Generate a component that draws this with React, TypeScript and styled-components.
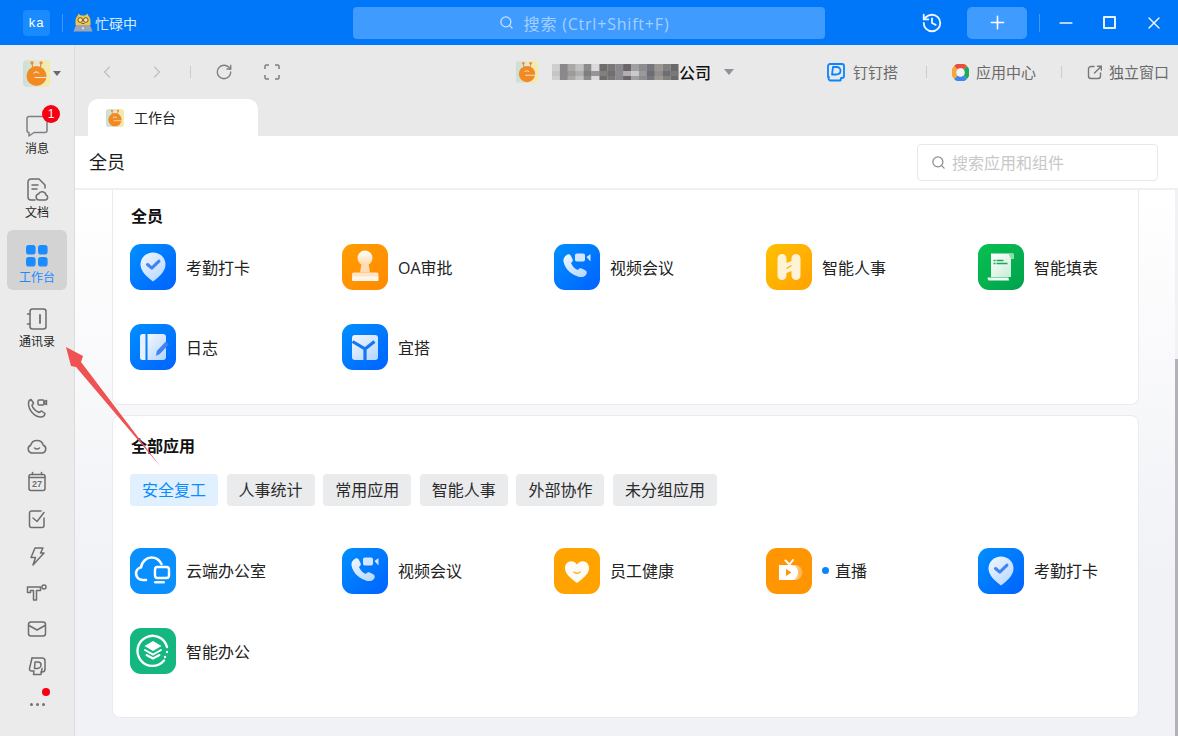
import React from "react";
import styled, { createGlobalStyle } from "styled-components";
import { ChevronLeft, ChevronRight, RotateCw, Search, Plus, Minus, X, History } from "lucide-react";

const Global = createGlobalStyle`
  html, body { margin: 0; padding: 0; width: 1178px; height: 736px; overflow: hidden; }
  body { font-family: "Open Sans", "Noto Sans CJK SC", sans-serif; color: #1f1f1f; }
  * { box-sizing: border-box; }
`;

const Shell = styled.div`
  position: relative;
  width: 1178px;
  height: 736px;
  display: flex;
  flex-direction: column;
  overflow: hidden;
`;

/* title bar */
const TitleBar = styled.header`
  height: 45px;
  flex: none;
  background: #0077f8;
  display: flex;
  align-items: center;
  color: #fff;
`;
const Logo = styled.div`
  width: 27px;
  height: 26px;
  margin-left: 23px;
  border-radius: 4px;
  background: #1a8bff;
  font: 13px "Liberation Sans", sans-serif;
  letter-spacing: 1px;
  display: flex;
  align-items: center;
  justify-content: center;
`;
const TitleDivider = styled.span<{ $left: number }>`
  width: 1px;
  height: 18px;
  margin-left: ${(p) => p.$left}px;
  background: #3f98fb;
`;
const Status = styled.div`
  width: 280px;
  margin-left: 10px;
  display: flex;
  align-items: center;
  gap: 2px;
  font-size: 14px;
  color: #d8e9ff;
`;
const GlobalSearch = styled.div`
  width: 472px;
  height: 32px;
  border-radius: 4px;
  background: #409bff;
  color: #a5cfff;
  font-size: 16px;
  letter-spacing: 0.8px;
  display: flex;
  align-items: center;
  justify-content: center;
  gap: 10px;
  padding-right: 10px;
`;
const WinBtn = styled.div<{ $left: number }>`
  margin-left: ${(p) => p.$left}px;
  display: flex;
  align-items: center;
  justify-content: center;
`;
const AddBtn = styled.div`
  width: 60px;
  height: 32px;
  margin-left: 24px;
  border-radius: 5px;
  background: #409bff;
  display: flex;
  align-items: center;
  justify-content: center;
`;
const MaxBox = styled.span`
  width: 13px;
  height: 13px;
  border: 2px solid #e6f1ff;
  border-radius: 1px;
  display: block;
`;

const Body = styled.div`
  flex: 1;
  min-height: 0;
  display: flex;
`;

/* side rail */
const Rail = styled.nav`
  width: 75px;
  flex: none;
  background: #ebebeb;
  border-right: 1px solid #dcdcdc;
  display: flex;
  flex-direction: column;
  align-items: center;
  padding-top: 15px;
`;
const RailAvatar = styled.div`
  height: 27px;
  width: 100%;
  padding-left: 23px;
  margin-bottom: 14px;
  display: flex;
  align-items: center;
  gap: 3px;
`;
const Caret = styled.i<{ $color: string; $w: number }>`
  display: block;
  width: 0;
  height: 0;
  border-left: ${(p) => p.$w}px solid transparent;
  border-right: ${(p) => p.$w}px solid transparent;
  border-top: ${(p) => p.$w + 1}px solid ${(p) => p.$color};
`;
const RailItem = styled.div<{ $active?: boolean }>`
  position: relative;
  width: 60px;
  height: 60px;
  margin-bottom: 4.6px;
  border-radius: 6px;
  background: ${(p) => (p.$active ? "#d3d3d3" : "transparent")};
  color: ${(p) => (p.$active ? "#1a8cff" : "#1f1f1f")};
  font-size: 12px;
  line-height: 16px;
  display: flex;
  flex-direction: column;
  align-items: center;
  justify-content: flex-end;
  padding-bottom: 4.5px;
  gap: 3px;
`;
const Badge = styled.span`
  position: absolute;
  left: 35px;
  top: 4px;
  width: 18px;
  height: 18px;
  border-radius: 50%;
  background: #f60012;
  color: #fff;
  font: 12px/18px "Liberation Sans", sans-serif;
  text-align: center;
`;
const RailSmall = styled.div`
  margin-top: 38px;
  display: flex;
  flex-direction: column;
  align-items: center;
  gap: 14.85px;
`;
const More = styled.div`
  position: relative;
  width: 20px;
  height: 20px;
  margin-top: 2px;
  display: flex;
  align-items: center;
  justify-content: center;
  gap: 3px;
`;
const MoreDot = styled.i`
  width: 3px;
  height: 3px;
  border-radius: 50%;
  background: #6f6f78;
`;
const RedDot = styled.i`
  position: absolute;
  right: -3px;
  top: -6px;
  width: 8px;
  height: 8px;
  border-radius: 50%;
  background: #f60012;
`;

/* main */
const Main = styled.main`
  flex: 1;
  min-width: 0;
  display: flex;
  flex-direction: column;
`;
const Toolbar = styled.div`
  height: 54px;
  flex: none;
  background: #e9e9e9;
  display: flex;
  align-items: center;
  padding-right: 9px;
`;
const NavGroup = styled.div`
  width: 441px;
  flex: none;
  padding-left: 22px;
  display: flex;
  align-items: center;
`;
const NavBtn = styled.div<{ $left: number }>`
  margin-left: ${(p) => p.$left}px;
  display: flex;
  align-items: center;
`;
const ToolDivider = styled.span<{ $left: number; $right: number }>`
  width: 1px;
  height: 12px;
  background: #cbcbcb;
  margin: 0 ${(p) => p.$right}px 0 ${(p) => p.$left}px;
`;
const Company = styled.div`
  display: flex;
  align-items: center;
  font-size: 16px;
  font-weight: 500;
  color: #111;
`;
const CompanyGap = styled.span`
  width: 12px;
`;
const CompanyName = styled.span`
  margin-right: 13px;
  width: 32px;
  white-space: nowrap;
`;
const ToolLinks = styled.div`
  margin-left: auto;
  display: flex;
  align-items: center;
  font-size: 15px;
  color: #6a6a6a;
`;
const ToolLink = styled.div<{ $gap: number }>`
  display: flex;
  align-items: center;
  gap: ${(p) => p.$gap}px;
  white-space: nowrap;
`;
const Raised = styled.span`
  padding-bottom: 2px;
`;
const TabRow = styled.div`
  height: 37px;
  flex: none;
  background: #e9e9e9;
  padding-left: 13px;
  display: flex;
  align-items: flex-end;
`;
const Tab = styled.div`
  width: 170px;
  height: 37px;
  border-radius: 10px 10px 0 0;
  background: #fff;
  padding-left: 18px;
  display: flex;
  align-items: center;
  gap: 10px;
  font-size: 14px;
  color: #222;
`;
const PageHead = styled.div`
  height: 54px;
  flex: none;
  background: #fff;
  border-bottom: 2px solid #f0f0f3;
  padding: 0 20px 0 14px;
  display: flex;
  align-items: center;
  justify-content: space-between;
  font-size: 18px;
  color: #1a1a1a;
`;
const SearchBox = styled.div`
  width: 241px;
  height: 37px;
  border: 1px solid #e8e8e8;
  border-radius: 4px;
  display: flex;
  align-items: center;
  gap: 6px;
  padding-left: 13px;
  font-size: 16px;
  color: #c8c8c8;
`;
const Scroll = styled.div`
  position: relative;
  flex: 1;
  min-height: 0;
  padding: 0 39px 0 37px;
  background: linear-gradient(#ffffff, #f1f2f6 70%);
  overflow: hidden;
`;
const ScrollThumb = styled.i`
  position: absolute;
  right: 0;
  top: 169px;
  bottom: 0;
  width: 3px;
  background: #b2b2b8;
`;
const ScrollTrack = styled.i`
  position: absolute;
  right: 0;
  top: 0;
  bottom: 0;
  width: 3px;
  background: #f2f2f5;
`;
const Card = styled.section<{ $top: number; $bottom: number; $open?: boolean }>`
  width: 1027px;
  background: #fff;
  border: 1px solid #ebebef;
  border-top: ${(p) => (p.$open ? "none" : "1px solid #ebebef")};
  border-radius: ${(p) => (p.$open ? "0 0 8px 8px" : "8px")};
  padding: ${(p) => p.$top}px 17px ${(p) => p.$bottom}px 17px;
  margin-bottom: 10px;
`;
const CardTitle = styled.h2`
  margin: 0 0 0 1px;
  font-size: 16px;
  font-weight: 700;
  line-height: 24px;
  color: #111;
`;
const AppGrid = styled.div<{ $top: number }>`
  margin-top: ${(p) => p.$top}px;
  display: grid;
  grid-template-columns: repeat(5, 212px);
  grid-auto-rows: 46px;
  row-gap: 34.4px;
`;
const App_ = styled.div`
  display: flex;
  align-items: center;
  gap: 10px;
  font-size: 16px;
  color: #222;
`;
const AppName = styled.span`
  margin-bottom: 1px;
`;
const Tile = styled.div<{ $bg: string }>`
  width: 46px;
  height: 46px;
  flex: none;
  border-radius: 11px;
  background: ${(p) => p.$bg};
  overflow: hidden;
`;
const LiveDot = styled.i`
  width: 7px;
  height: 7px;
  border-radius: 50%;
  background: #0a84ff;
  margin-right: -4px;
`;
const Chips = styled.div`
  margin-top: 16px;
  display: flex;
  gap: 8.6px;
`;
const Chip = styled.div<{ $active?: boolean }>`
  height: 32px;
  padding: 0 12px;
  border-radius: 4px;
  background: ${(p) => (p.$active ? "#e0f0ff" : "#eaebed")};
  color: ${(p) => (p.$active ? "#0a8cff" : "#2a2a2a")};
  font-size: 16px;
  line-height: 32px;
  white-space: nowrap;
`;
const ArrowLayer = styled.svg`
  position: absolute;
  left: 0;
  top: 0;
  pointer-events: none;
`;

/* drawings */
const Mascot = ({ size }: { size: number }) => (
  <svg width={size} height={size} viewBox="0 0 27 27" style={{ flex: "none" }}>
    <defs>
      <linearGradient id="mbg" x1="0" x2="1" y1="0" y2="0">
        <stop offset="0" stopColor="#c9e0d8" />
        <stop offset="0.55" stopColor="#e6e6d0" />
        <stop offset="1" stopColor="#f7eca0" />
      </linearGradient>
    </defs>
    <rect width="27" height="27" rx="4" fill="url(#mbg)" />
    <path d="M10 9 9 3.500M17 9l1-5.500" stroke="#f08a2c" strokeWidth="1.200" />
    <circle cx="9" cy="2.800" r="1.600" fill="#f08a2c" />
    <circle cx="18" cy="2.800" r="1.600" fill="#f08a2c" />
    <circle cx="13.500" cy="16" r="10" fill="#f28a24" />
    <path d="M10.500 13.500a3.200 3.200 0 0 1 5.500 0" stroke="#fff" strokeWidth="1" fill="none" />
    <path d="M11.500 17.500h12" stroke="#fde7c8" strokeWidth="1.100" />
  </svg>
);

const BusyDog = () => (
  <svg width="20" height="19" viewBox="0 0 20 19">
    <path d="M4.500 3 5.500.8 8 2.500h4L14.500.8l1 2.200c1.600 1.500 2 3.500 2 5.500V12h-15V8.500c0-2 .4-4 2-5.500z" fill="#f3c548" />
    <circle cx="7.200" cy="7" r="2.300" fill="#fbe8a8" stroke="#54452a" strokeWidth=".9" />
    <circle cx="12.800" cy="7" r="2.300" fill="#fbe8a8" stroke="#54452a" strokeWidth=".9" />
    <path d="M8.500 10.500h3" stroke="#8a5a22" />
    <path d="M3 12h14l2.500 6.500H.5z" fill="#9aa5b6" />
    <circle cx="10" cy="15.300" r="1" fill="#eef3fa" />
  </svg>
);

const S = { fill: "none", stroke: "#6e6e6e", strokeWidth: 1.500, strokeLinecap: "round", strokeLinejoin: "round" } as const;

const IcMsg = () => (
  <svg width="24" height="24" viewBox="0 0 24 24" {...S}>
    <path d="M4 2.500h16a2 2 0 0 1 2 2v12a2 2 0 0 1-2 2H9l-5 3.500v-3.500a2 2 0 0 1-2-2v-12a2 2 0 0 1 2-2z" stroke="#7b8087" />
  </svg>
);
const IcDoc = () => (
  <svg width="24" height="24" viewBox="0 0 24 24" {...S}>
    <path d="M10 22H6a3 3 0 0 1-3-3V4a3 3 0 0 1 3-3h8l6 6v3" />
    <path d="M7 7h6M7 11h5" />
    <path d="M14 22a3 3 0 0 1-.6-5.900 4 4 0 0 1 7.600 .9 2.600 2.600 0 0 1-.5 5z" />
  </svg>
);
const IcBook = () => (
  <svg width="24" height="24" viewBox="0 0 24 24" {...S}>
    <rect x="5" y="2" width="16" height="20" rx="2.500" />
    <path d="M2.500 7H5M2.500 17H5" />
    <path d="M15 8v8" strokeWidth="1.800" />
  </svg>
);
const IcGrid = () => (
  <svg width="22" height="22" viewBox="0 0 22 22" fill="#1a8cff">
    <rect x="0" y="0" width="9.600" height="9.600" rx="2.800" />
    <rect x="12" y="0" width="9.600" height="9.600" rx="2.800" />
    <rect x="0" y="12" width="9.600" height="9.600" rx="2.800" />
    <rect x="12" y="12" width="9.600" height="9.600" rx="2.800" />
  </svg>
);
const Small = ({ children }: { children: React.ReactNode }) => (
  <svg width="22" height="22" viewBox="0 0 22 22" {...S} style={{ display: "block" }}>
    {children}
  </svg>
);
const smallIcons = [
  <Small key="a">
    <path d="M5 2.500 7.500 6 6 8.500c1 3 3.500 5.500 7 7l2.500-1.500L19 16.500c-.5 2.500-2 3.500-4 3.500C8.500 20 2.500 13 2.500 6.500 2.500 4.500 3 3 5 2.500z" />
    <rect x="12" y="3" width="6" height="5" rx="1" />
    <path d="m18 5 2.500-1.500v4L18 6" />
  </Small>,
  <Small key="b">
    <path d="M6 19a4 4 0 0 1-1.300-7.700 6.500 6.500 0 0 1 12.600 0A4 4 0 0 1 16 19z" />
    <path d="M8.500 14c1.500 1.200 3.500 1.200 5 0" />
  </Small>,
  <Small key="c">
    <rect x="3" y="3.500" width="16" height="16" rx="2" />
    <path d="M6.500 1.500v2M15.500 1.500v2M3 6.500h16" />
    <text x="11" y="16" textAnchor="middle" fontSize="9" fontWeight="700" fontFamily="Liberation Sans" fill="#6e6e6e" stroke="none">27</text>
  </Small>,
  <Small key="d">
    <path d="M18 10v7.500a2 2 0 0 1-2 2H5.500a2 2 0 0 1-2-2V5a2 2 0 0 1 2-2H15" />
    <path d="m7 10 4 3.500 7-9" />
  </Small>,
  <Small key="e">
    <path d="M9 3h8l-2.500 5H18L7 20l2.500-7.500H5z" />
  </Small>,
  <Small key="f">
    <path d="M1.500 5h13v3.500h-4V18H7.500V8.500h-3v2h-3z" />
    <circle cx="18" cy="5" r="2" />
  </Small>,
  <Small key="g">
    <rect x="2.500" y="4" width="17" height="14" rx="2.500" />
    <path d="m3 7.500 8 4.500 8-4.500" />
  </Small>,
  <Small key="h">
    <path d="M6 3h10a3 3 0 0 1 3 3v8a3 3 0 0 1-3 3h-1" />
    <path d="M6 3 3.500 13.500a2 2 0 0 0 2 2.500H8l-.5 3.500H15l1-6" />
    <path d="M9 7h3a3 3 0 0 1 3 3c0 2-2 3.500-4 3.500H8.500z" />
  </Small>,
];

const IcDing = () => (
  <svg width="20" height="20" viewBox="0 0 20 20" fill="none" stroke="#0a84ff" strokeWidth="1.800" strokeLinejoin="round">
    <path d="M4 2h12a2 2 0 0 1 2 2v10a2 2 0 0 1-2 2h-1l-.5 2.500H4.500a2 2 0 0 1-2-2L3 15H2V4a2 2 0 0 1 2-2z" />
    <path d="M7 5h4a3.500 3.500 0 0 1 3.500 3.500c0 2.500-2 4-4.500 4H6z" />
  </svg>
);
const IcCenter = () => (
  <svg width="17" height="17" viewBox="0 0 16 16" fill="none" strokeWidth="4.500">
    <path d="M3.500 3.500A6.300 6.300 0 0 1 12.500 3.500" stroke="#ea4d3b" />
    <path d="M12.500 3.500A6.300 6.300 0 0 1 12.500 12.500" stroke="#22a85a" />
    <path d="M12.500 12.500A6.300 6.300 0 0 1 3.500 12.500" stroke="#3c86ee" />
    <path d="M3.500 12.500A6.300 6.300 0 0 1 3.500 3.500" stroke="#f6a73a" />
    <rect x="5" y="5" width="6" height="6" rx=".6" fill="#f5f5f5" stroke="none" />
  </svg>
);
const IcPop = () => (
  <svg width="16" height="16" viewBox="0 0 16 16" fill="none" stroke="#777" strokeWidth="1.400" strokeLinecap="round">
    <path d="M7 2.500H4a2.500 2.500 0 0 0-2.500 2.500v7A2.500 2.500 0 0 0 4 14.500h7a2.500 2.500 0 0 0 2.500-2.500V9" />
    <path d="M7.500 9 14 2.500M10.500 2.200h3.800V6" />
  </svg>
);
const IcScan = () => (
  <svg width="16" height="16" viewBox="0 0 16 16" fill="none" stroke="#7c7c7c" strokeWidth="1.500">
    <path d="M5 1H2.500A1.500 1.500 0 0 0 1 2.500V5M11 1h2.500A1.500 1.500 0 0 1 15 2.500V5M5 15H2.500A1.500 1.500 0 0 1 1 13.500V11M11 15h2.500a1.500 1.500 0 0 0 1.500-1.500V11" />
  </svg>
);
const mosaic = ["#cfcfcf","#8a8888","#a8a8a8","#bfc0c0","#8b8b8b","#dadada","#6f6c6c","#7b7879","#8c8890","#6b656c","#a0a0a3","#8d8d90","#777680","#9a9690","#80807f","#6a6a6c"];
const Mosaic = () => (
  <svg width="129" height="18" viewBox="0 0 129 18" style={{ flex: "none", filter: "blur(0.6px)" }}>
    {mosaic.map((c, i) => (
      <rect key={i} x={2 + i * 7.900} y={1} width={8} height={16} fill={c} />
    ))}
    {mosaic.map((c, i) => (
      <rect key={i} x={2 + i * 7.900} y={8} width={8} height={5} fill={mosaic[(i * 5 + 3) % 16]} opacity={0.7} />
    ))}
  </svg>
);

const G = ({ children }: { children: React.ReactNode }) => (
  <svg width="46" height="46" viewBox="0 0 46 46" style={{ display: "block" }}>
    <defs>
      <linearGradient id="pale" x1="0" x2="0.8" y1="0" y2="1">
        <stop offset="0" stopColor="#f2f7ff" />
        <stop offset="1" stopColor="#b9d8ff" />
      </linearGradient>
      <linearGradient id="ora" x1="0" x2="0" y1="0" y2="1">
        <stop offset="0" stopColor="#fff" />
        <stop offset="1" stopColor="#ffd7a8" />
      </linearGradient>
      <linearGradient id="grn" x1="0" x2="1" y1="0" y2="1">
        <stop offset="0" stopColor="#fff" />
        <stop offset="1" stopColor="#c4ecd3" />
      </linearGradient>
      <linearGradient id="tv" x1="0" x2="1" y1="0" y2="0">
        <stop offset="0" stopColor="#ffffff" stopOpacity=".9" />
        <stop offset="1" stopColor="#ffffff" stopOpacity=".25" />
      </linearGradient>
    </defs>
    {children}
  </svg>
);
const GlyphCheck = () => (
  <G>
    <path d="M23 8.500c7 0 12.500 5.300 12.500 12 0 6-5.500 12-12.500 17-7-5-12.500-11-12.500-17 0-6.700 5.500-12 12.500-12z" fill="url(#pale)" />
    <path d="m17.500 20.500 4.300 3.700 7.200-7" fill="none" stroke="#3f83f4" strokeWidth="3" strokeLinecap="round" strokeLinejoin="round" />
  </G>
);
const GlyphStamp = () => (
  <G>
    <circle cx="23" cy="14" r="7.500" fill="url(#ora)" />
    <path d="M19.500 19.500h7l1.500 9h-10z" fill="#ffdcb4" />
    <rect x="10" y="28.500" width="26.500" height="5" rx="1.500" fill="#ffe4c6" />
    <rect x="10" y="32.500" width="26.500" height="4.500" rx="1" fill="#fff6ec" />
  </G>
);
const GlyphVideo = () => (
  <G>
    <path d="M12 11.500c2-1.700 4-1.500 5 .5l1.700 3.500c.5 1.200 0 2.200-1.700 3.500 1.500 3.500 3.500 5.500 6.700 7 1.500-1.700 2.700-2 4-1.500l3.500 1.700c2 1 2 3.300.5 5-2 2-5 2.500-8.500 1C15 29.500 10.500 23 9.500 17.500c-.4-2.500.7-4.600 2.500-6z" fill="url(#pale)" />
    <rect x="21" y="9.500" width="10" height="8" rx="1.800" fill="#d3e5ff" />
    <path d="m32.500 13 4-3v7.500z" fill="#d3e5ff" />
  </G>
);
const GlyphH = () => (
  <G>
    <path d="M11.500 14.500a4.500 4.500 0 0 1 9 0V19l5-2v-2.500a4.500 4.500 0 0 1 9 0v17a4.500 4.500 0 0 1-9 0V27l-5 2v2.500a4.500 4.500 0 0 1-9 0z" fill="#fff" opacity=".84" />
    <path d="M20.500 24.500 25.500 21.500" stroke="#ffb000" strokeWidth="1.300" />
  </G>
);
const GlyphForm = () => (
  <G>
    <path d="M13 9.500h21.500c.8 0 1.500.7 1.500 1.500v4h-3v18H13z" fill="url(#grn)" />
    <path d="M30.500 9.500h4c.8 0 1.500.7 1.500 1.500v4h-3z" fill="#8ddcae" />
    <path d="M9.500 33.500h21l.5 3h-20c-1 0-1.500-1.500-1.500-3z" fill="#f1fbf5" />
    <path d="M15.500 16.500h2M15.500 19.500h2M18.500 16.500h7M18.500 19.500h11" stroke="#17a85a" strokeWidth="1.300" />
  </G>
);
const GlyphLog = () => (
  <G>
    <path d="M12.500 10h3v26h-3a2.500 2.500 0 0 1-2.500-2.500v-21A2.500 2.500 0 0 1 12.500 10z" fill="#e6f0ff" />
    <path d="M17.500 10H33a3 3 0 0 1 3 3v20a3 3 0 0 1-3 3H17.500z" fill="url(#pale)" />
    <path d="m26 32 .8-5 9-9.500 3 3-9 9.500z" fill="#3f83f4" />
  </G>
);
const GlyphYi = () => (
  <G>
    <rect x="10" y="11" width="26" height="25" rx="3" fill="url(#pale)" />
    <path d="M10.500 17.500 23 25v12M23 25l9.500-7.500" fill="none" stroke="#1276f5" strokeWidth="3.200" />
  </G>
);
const GlyphCloud = () => (
  <G>
    <path d="M16 32h-3.500a6.500 6.500 0 0 1-1.500-12.800C12 13.500 16.500 9.500 21.500 9.500c4.500 0 8 2.500 10 6.500" fill="none" stroke="#fff" strokeWidth="2.600" strokeLinecap="round" />
    <rect x="25" y="19" width="14" height="11" rx="2.500" fill="none" stroke="#fff" strokeWidth="2.400" />
    <rect x="24" y="33" width="11" height="2.600" rx="1.300" fill="#fff" opacity=".9" />
  </G>
);
const GlyphHeart = () => (
  <G>
    <path d="M23 35C15.500 29.500 11 25.500 11 20c0-4 2.800-6.800 6.200-6.800 2.500 0 4.400 1.200 5.800 3.300 1.400-2.100 3.300-3.300 5.800-3.300C32.200 13.200 35 16 35 20c0 5.500-4.500 9.500-12 15z" fill="#fff" opacity=".96" />
    <path d="M20 24c1.800 1.700 4.200 1.700 6 0" stroke="#ffb338" strokeWidth="1.600" fill="none" strokeLinecap="round" />
  </G>
);
const GlyphTv = () => (
  <G>
    <path d="M22 17h7a7.500 7.500 0 0 1 0 15h-7z" fill="url(#tv)" />
    <path d="M13 17h12a7.500 7.500 0 0 1 2 .3c3 1 5 3.800 5 7.200s-2 6.200-5 7.200a7.500 7.500 0 0 1-2 .3H13z" fill="#fff" />
    <path d="m19.500 12.500 4 4 3.500-4.500" stroke="#fff" strokeWidth="2" fill="none" strokeLinecap="round" />
    <path d="m20 21 5.500 3.500-5.500 3.500z" fill="#ff9500" />
  </G>
);
const GlyphSmart = () => (
  <G>
    <path d="M34 32.500A15 15 0 1 1 37 19" fill="none" stroke="#fff" strokeWidth="2.400" strokeLinecap="round" />
    <circle cx="37" cy="24" r="1.200" fill="#fff" />
    <circle cx="35" cy="29" r="1.200" fill="#fff" />
    <path d="m23 13 8.500 5-8.500 5-8.500-5z" fill="#fff" />
    <path d="m15 22 8 4.500 8-4.500M16.500 27l6.500 3.500 6.500-3.500" fill="none" stroke="#fff" strokeWidth="2" strokeLinecap="round" />
  </G>
);

const blue = "linear-gradient(135deg, #0090ff 0%, #0062ff 100%)";
const TileCheck = <Tile $bg={blue}><GlyphCheck /></Tile>;
const TileVideo = <Tile $bg={blue}><GlyphVideo /></Tile>;

const AppCell = ({ tile, name, dot }: { tile: React.ReactNode; name: string; dot?: boolean }) => (
  <App_>
    {tile}
    {dot && <LiveDot />}
    <AppName>{name}</AppName>
  </App_>
);

export default function App() {
  return (
    <Shell>
      <Global />
      <TitleBar>
        <Logo>ka</Logo>
        <TitleDivider $left={12} />
        <Status>
          <BusyDog />
          <span>忙碌中</span>
        </Status>
        <GlobalSearch>
          <Search size={15} color="#c8e1ff" strokeWidth={2} />
          <span>搜索 (Ctrl+Shift+F)</span>
        </GlobalSearch>
        <WinBtn $left={96}><History size={22} color="#eef6ff" strokeWidth={2} /></WinBtn>
        <AddBtn><Plus size={21} color="#fff" strokeWidth={1.800} /></AddBtn>
        <TitleDivider $left={12} />
        <WinBtn $left={16}><Minus size={20} color="#eef6ff" strokeWidth={2} /></WinBtn>
        <WinBtn $left={27}><MaxBox /></WinBtn>
        <WinBtn $left={28}><X size={20} color="#eef6ff" strokeWidth={1.700} /></WinBtn>
      </TitleBar>
      <Body>
        <Rail>
          <RailAvatar>
            <Mascot size={27} />
            <Caret $color="#6a6a6a" $w={4} />
          </RailAvatar>
          <RailItem>
            <IcMsg />
            <Badge>1</Badge>
            <span>消息</span>
          </RailItem>
          <RailItem><IcDoc /><span>文档</span></RailItem>
          <RailItem $active><IcGrid /><span>工作台</span></RailItem>
          <RailItem><IcBook /><span>通讯录</span></RailItem>
          <RailSmall>
            {smallIcons}
            <More>
              <MoreDot /><MoreDot /><MoreDot />
              <RedDot />
            </More>
          </RailSmall>
        </Rail>
        <Main>
          <Toolbar>
            <NavGroup>
              <NavBtn $left={0}><ChevronLeft size={20} color="#c2c2c2" strokeWidth={1.600} /></NavBtn>
              <NavBtn $left={30}><ChevronRight size={20} color="#c2c2c2" strokeWidth={1.600} /></NavBtn>
              <ToolDivider $left={23} $right={0} />
              <NavBtn $left={24}><RotateCw size={18} color="#7c7c7c" strokeWidth={1.700} /></NavBtn>
              <NavBtn $left={31}><IcScan /></NavBtn>
            </NavGroup>
            <Company>
              <Mascot size={22} />
              <CompanyGap />
              <Mosaic />
              <CompanyName>公司</CompanyName>
              <Caret $color="#8f929b" $w={5.500} />
            </Company>
            <ToolLinks>
              <ToolLink $gap={7}><IcDing /><Raised>钉钉搭</Raised></ToolLink>
              <ToolDivider $left={28} $right={25} />
              <ToolLink $gap={7}><IcCenter /><Raised>应用中心</Raised></ToolLink>
              <ToolDivider $left={25} $right={25} />
              <ToolLink $gap={6}><IcPop /><Raised>独立窗口</Raised></ToolLink>
            </ToolLinks>
          </Toolbar>
          <TabRow>
            <Tab><Mascot size={18} /><Raised>工作台</Raised></Tab>
          </TabRow>
          <PageHead>
            <Raised>全员</Raised>
            <SearchBox>
              <Search size={15} color="#8c8c8c" strokeWidth={2} />
              <span>搜索应用和组件</span>
            </SearchBox>
          </PageHead>
          <Scroll>
            <Card $open $top={14} $bottom={33.6}>
              <CardTitle>全员</CardTitle>
              <AppGrid $top={16}>
                <AppCell tile={TileCheck} name="考勤打卡" />
                <AppCell tile={<Tile $bg="linear-gradient(135deg,#ff9d00,#ff8a00)"><GlyphStamp /></Tile>} name="OA审批" />
                <AppCell tile={TileVideo} name="视频会议" />
                <AppCell tile={<Tile $bg="linear-gradient(135deg,#ffc000,#ffa200)"><GlyphH /></Tile>} name="智能人事" />
                <AppCell tile={<Tile $bg="linear-gradient(135deg,#08c150,#00a14d)"><GlyphForm /></Tile>} name="智能填表" />
                <AppCell tile={<Tile $bg={blue}><GlyphLog /></Tile>} name="日志" />
                <AppCell tile={<Tile $bg={blue}><GlyphYi /></Tile>} name="宜搭" />
              </AppGrid>
            </Card>
            <Card $top={18} $bottom={42.6}>
              <CardTitle>全部应用</CardTitle>
              <Chips>
                <Chip $active>安全复工</Chip>
                <Chip>人事统计</Chip>
                <Chip>常用应用</Chip>
                <Chip>智能人事</Chip>
                <Chip>外部协作</Chip>
                <Chip>未分组应用</Chip>
              </Chips>
              <AppGrid $top={42}>
                <AppCell tile={<Tile $bg="#0a8fff"><GlyphCloud /></Tile>} name="云端办公室" />
                <AppCell tile={TileVideo} name="视频会议" />
                <AppCell tile={<Tile $bg="#ffa300"><GlyphHeart /></Tile>} name="员工健康" />
                <AppCell tile={<Tile $bg="#ff9500"><GlyphTv /></Tile>} name="直播" dot />
                <AppCell tile={TileCheck} name="考勤打卡" />
                <AppCell tile={<Tile $bg="#14b77f"><GlyphSmart /></Tile>} name="智能办公" />
              </AppGrid>
            </Card>
            <ScrollTrack />
            <ScrollThumb />
          </Scroll>
        </Main>
      </Body>
      <ArrowLayer width="1178" height="736" viewBox="0 0 1178 736">
        <polygon points="66,347 83,356 81,362 160,466 76,367 71,366" fill="#ee5253" />
      </ArrowLayer>
    </Shell>
  );
}
